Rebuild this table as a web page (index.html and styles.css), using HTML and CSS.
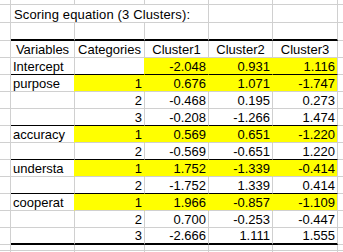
FILE: index.html
```html
<!DOCTYPE html>
<html>
<head>
<meta charset="utf-8">
<title>Scoring equation</title>
<link rel="stylesheet" href="styles.css">
</head>
<body>
<div class="sheet">
  <div class="row r0"><div class="c"></div><div class="c"></div><div class="c"></div><div class="c"></div><div class="c"></div><div class="c"></div><div class="c e"></div></div>
  <div class="row rtitle"><div class="c"></div><div class="c title">Scoring equation (3 Clusters):</div><div class="c"></div><div class="c"></div><div class="c e"></div></div>
  <div class="row rgap thick"><div class="c"></div><div class="c t"></div><div class="c t"></div><div class="c t"></div><div class="c t"></div><div class="c t"></div><div class="c e"></div></div>

  <div class="row tr"><div class="c"></div><div class="c t ctr">Variables</div><div class="c t ctr">Categories</div><div class="c t ctr">Cluster1</div><div class="c t ctr">Cluster2</div><div class="c t ctr">Cluster3</div><div class="c e"></div></div>
  <div class="row tr sep"><div class="c"></div><div class="c t">Intercept</div><div class="c t yr"></div><div class="c t num y yr">-2.048</div><div class="c t num y yr">0.931</div><div class="c t num y">1.116</div><div class="c e"></div></div>

  <div class="row tr"><div class="c"></div><div class="c t yr">purpose</div><div class="c t num y yr">1</div><div class="c t num y yr">0.676</div><div class="c t num y yr">1.071</div><div class="c t num y">-1.747</div><div class="c e"></div></div>
  <div class="row tr"><div class="c"></div><div class="c t"></div><div class="c t num">2</div><div class="c t num">-0.468</div><div class="c t num">0.195</div><div class="c t num">0.273</div><div class="c e"></div></div>
  <div class="row tr sep"><div class="c"></div><div class="c t"></div><div class="c t num">3</div><div class="c t num">-0.208</div><div class="c t num">-1.266</div><div class="c t num">1.474</div><div class="c e"></div></div>

  <div class="row tr"><div class="c"></div><div class="c t yr">accuracy</div><div class="c t num y yr">1</div><div class="c t num y yr">0.569</div><div class="c t num y yr">0.651</div><div class="c t num y">-1.220</div><div class="c e"></div></div>
  <div class="row tr sep"><div class="c"></div><div class="c t"></div><div class="c t num">2</div><div class="c t num">-0.569</div><div class="c t num">-0.651</div><div class="c t num">1.220</div><div class="c e"></div></div>

  <div class="row tr"><div class="c"></div><div class="c t yr">understa</div><div class="c t num y yr">1</div><div class="c t num y yr">1.752</div><div class="c t num y yr">-1.339</div><div class="c t num y">-0.414</div><div class="c e"></div></div>
  <div class="row tr sep"><div class="c"></div><div class="c t"></div><div class="c t num">2</div><div class="c t num">-1.752</div><div class="c t num">1.339</div><div class="c t num">0.414</div><div class="c e"></div></div>

  <div class="row tr"><div class="c"></div><div class="c t yr">cooperat</div><div class="c t num y yr">1</div><div class="c t num y yr">1.966</div><div class="c t num y yr">-0.857</div><div class="c t num y">-1.109</div><div class="c e"></div></div>
  <div class="row tr"><div class="c"></div><div class="c t"></div><div class="c t num">2</div><div class="c t num">0.700</div><div class="c t num">-0.253</div><div class="c t num">-0.447</div><div class="c e"></div></div>
  <div class="row tr thick"><div class="c"></div><div class="c t"></div><div class="c t num">3</div><div class="c t num">-2.666</div><div class="c t num">1.111</div><div class="c t num">1.555</div><div class="c e"></div></div>

  <div class="row rtail"><div class="c"></div><div class="c"></div><div class="c"></div><div class="c"></div><div class="c"></div><div class="c"></div><div class="c e"></div></div>
  <div class="row rtail"><div class="c"></div><div class="c"></div><div class="c"></div><div class="c"></div><div class="c"></div><div class="c"></div><div class="c e"></div></div>
</div>
</body>
</html>
```

FILE: styles.css
```css
html, body {
  margin: 0;
  padding: 0;
  background: #ffffff;
}

body {
  font-family: "Liberation Sans", Arial, sans-serif;
  font-size: 13px;
  color: #000000;
}

.sheet {
  width: 343px;
  height: 252px;
  overflow: hidden;
}

.row {
  display: grid;
  grid-template-columns: 11px 64px 70px 64px 64px 65px 5px;
}

.r0 { height: 5px; }
.rtitle { height: 18px; }
.rgap { height: 18px; }
.tr { height: 17px; }
.rtail { height: 6px; }

.c {
  box-sizing: border-box;
  border-right: 1px solid #d0d0d0;
  border-bottom: 1px solid #d0d0d0;
  display: flex;
  align-items: flex-end;
  padding: 0 2px;
  line-height: 15px;
  white-space: nowrap;
  overflow: hidden;
}

.e { border-right: none; }

.title {
  grid-column: span 3;
  overflow: visible;
  padding-left: 3px;
  letter-spacing: 0.14px;
}

.ctr { justify-content: center; }
.num { justify-content: flex-end; }

.y { background: #ffff00; }
.yr { border-right-color: #ffff00; }

.sep .t { border-bottom-color: #000000; }
.thick .t { border-bottom: 2px solid #000000; }
```
